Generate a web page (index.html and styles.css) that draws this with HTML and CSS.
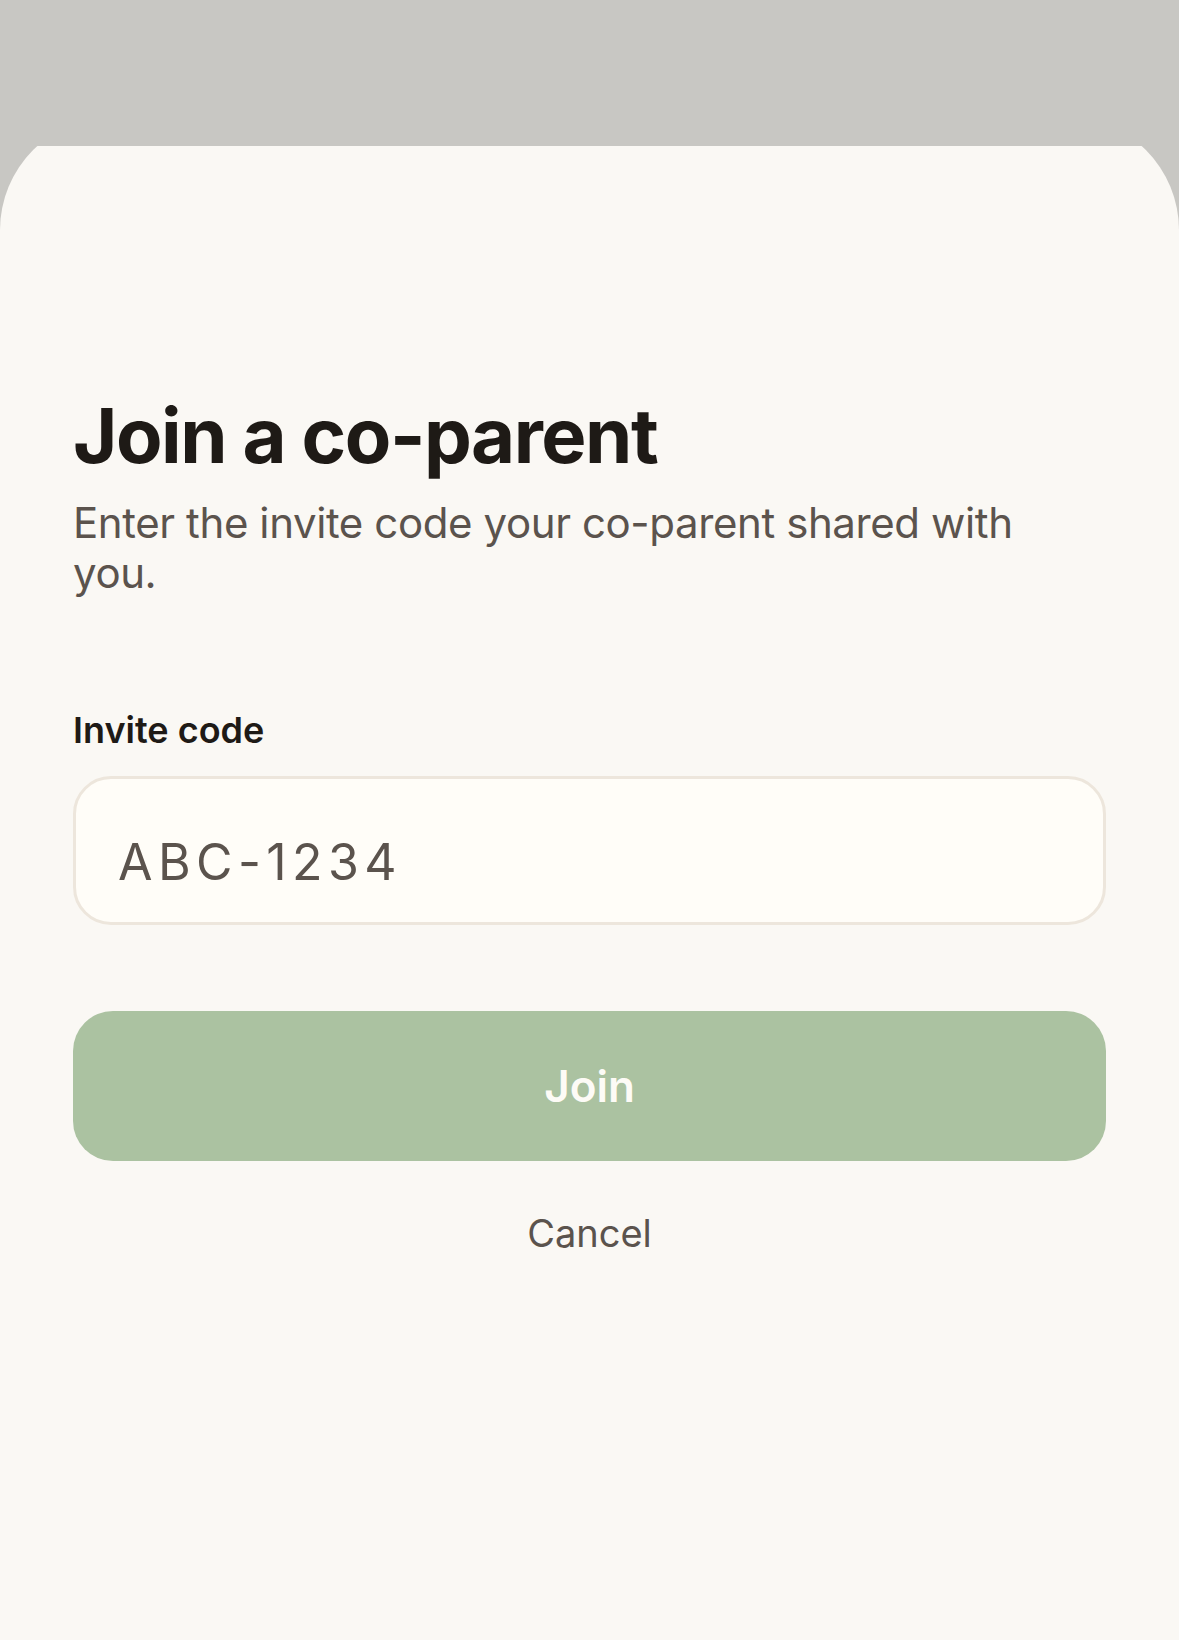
FILE: index.html
```html
<!DOCTYPE html>
<html>
<head>
    <title>Join a co-parent</title>
    <link rel="stylesheet" href="styles.css">
</head>
<body>
    <div class="viewport">
        <div class="sheet">
            <h1 class="title">Join a co-parent</h1>
            <p class="subtitle">Enter the invite code your co-parent shared with you.</p>

            <form class="join-form">
                <label class="field-label" for="invite-code">Invite code</label>
                <input class="code-input" type="text" id="invite-code" name="invite_code" value="ABC-1234">

                <button type="submit" class="btn-join">Join</button>
                <button type="button" class="btn-cancel">Cancel</button>
            </form>
        </div>
    </div>
</body>
</html>
```

FILE: styles.css
```css
body {
    margin: 0;
    background: #c8c7c3;
    font-family: Inter, "Noto Sans", sans-serif;
}
.viewport {
    margin-top: 146px;
    overflow: hidden;
    height: 1494px;
}
/* sheet top is partly hidden behind the backdrop edge */
.sheet {
    margin-top: -29px;
    min-height: 1523px;
    box-sizing: border-box;
    padding: 273px 73px 0;
    background: #faf8f4;
    border-radius: 113px 113px 0 0;
}
.title {
    margin: 0;
    font-size: 76px;
    line-height: 91px;
    font-weight: 700;
    color: #1e1a16;
    letter-spacing: -1.5px;
}
.subtitle {
    margin: 17px 0 0;
    max-width: 980px;
    font-size: 42px;
    line-height: 50px;
    color: #5b534d;
    letter-spacing: -0.4px;
}
.join-form {
    display: flex;
    flex-direction: column;
    margin-top: 110px;
}
.field-label {
    font-size: 36px;
    line-height: 44px;
    font-weight: 600;
    color: #1e1a16;
}
.code-input {
    margin-top: 24px;
    height: 149px;
    box-sizing: border-box;
    padding: 22px 42px 0;
    border: 3px solid #ede6dc;
    border-radius: 38px;
    background: #fffdf8;
    font-family: inherit;
    font-size: 50px;
    letter-spacing: 5.4px;
    color: #5b534d;
    outline: none;
}
.btn-join {
    margin-top: 86px;
    height: 150px;
    border: none;
    border-radius: 40px;
    background: #abc2a1;
    color: #fdfbf6;
    font-family: inherit;
    font-size: 44px;
    font-weight: 600;
    cursor: pointer;
}
.btn-cancel {
    margin-top: 47px;
    align-self: center;
    padding: 0;
    border: none;
    background: none;
    font-family: inherit;
    font-size: 38px;
    line-height: 50px;
    color: #5b534d;
    cursor: pointer;
}
```
